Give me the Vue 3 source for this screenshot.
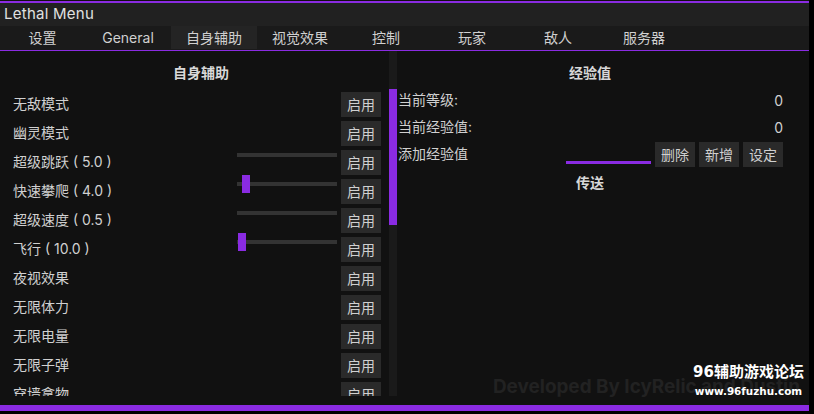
<script setup>
const tabs = ['设置', 'General', '自身辅助', '视觉效果', '控制', '玩家', '敌人', '服务器']
const rows = [
  { label: '无敌模式' },
  { label: '幽灵模式' },
  { label: '超级跳跃 ( 5.0 )', slider: true },
  { label: '快速攀爬 ( 4.0 )', slider: true, thumb: 5 },
  { label: '超级速度 ( 0.5 )', slider: true },
  { label: '飞行 ( 10.0 )', slider: true, thumb: 1 },
  { label: '夜视效果' },
  { label: '无限体力' },
  { label: '无限电量' },
  { label: '无限子弹' },
  { label: '穿墙拿物' }
]
</script>

<template>
  <div class="screen">
    <div class="window">
      <div class="title">Lethal Menu</div>
      <nav class="tabs">
        <div v-for="(t, i) in tabs" :key="t" class="tab" :class="{ active: i === 2 }">{{ t }}</div>
      </nav>
      <main class="main">
        <section class="left">
          <h2 class="head">自身辅助</h2>
          <div v-for="r in rows" :key="r.label" class="row">
            <span class="label">{{ r.label }}</span>
            <div v-if="r.slider" class="track">
              <i v-if="r.thumb" class="thumb" :style="{ left: r.thumb + 'px' }"></i>
            </div>
            <button class="btn">启用</button>
          </div>
        </section>
        <div class="scroll"><div class="scroll-thumb"></div></div>
        <section class="right">
          <h2 class="head">经验值</h2>
          <div class="info"><span class="lift">当前等级:</span><span class="val">0</span></div>
          <div class="info"><span class="lift">当前经验值:</span><span class="val">0</span></div>
          <div class="info">
            <span class="grow lift">添加经验值</span>
            <div class="input"></div>
            <div class="btns">
              <button class="btn">删除</button>
              <button class="btn">新增</button>
              <button class="btn">设定</button>
            </div>
          </div>
          <h2 class="head second">传送</h2>
        </section>
        <div class="credit">Developed By IcyRelic and Dustin</div>
      </main>
      <div class="bottom"></div>
    </div>
    <div class="mark">
      <div class="mark-a">96辅助游戏论坛</div>
      <div class="mark-b">www.96fuzhu.com</div>
    </div>
  </div>
</template>

<style scoped>
.screen {
  position: relative;
  width: 814px;
  height: 414px;
  background: #000;
  overflow: hidden;
  font-family: Inter, "Noto Sans CJK SC", sans-serif;
  color: #d0d0d0;
  font-size: 14px;
}
.window {
  width: 809px;
  height: 411px;
  padding-top: 1px;
  box-sizing: border-box;
  display: flex;
  flex-direction: column;
  background: #111;
}
.title {
  height: 23px;
  line-height: 22px;
  border-top: 2px solid #8a2be2;
  background: #212121;
  padding-left: 4px;
  font-size: 15px;
  letter-spacing: 0.25px;
  color: #e0e0e0;
}
.tabs {
  display: flex;
  height: 24px;
  background: #1a1a1a;
  border-bottom: 1px solid #8a2be2;
}
.tab {
  width: 86px;
  height: 23px;
  line-height: 24px;
  text-align: center;
  flex: none;
}
.tab:first-child {
  width: 85px;
}
.tab.active {
  background: #242424;
}
.main {
  position: relative;
  flex: 1;
  display: flex;
  min-height: 0;
}
.head {
  margin: 0;
  height: 22px;
  line-height: 22px;
  font-size: 14px;
  font-weight: 700;
  text-align: center;
  color: #d8d8d8;
}
.left {
  width: 389px;
  height: 345px;
  box-sizing: border-box;
  padding: 11px 8px 0 0;
  overflow: hidden;
  flex: none;
}
.left .head {
  margin: 0 -21px 8px 0;
}
.row {
  display: flex;
  align-items: center;
  height: 25px;
  margin-bottom: 4px;
  padding-left: 13px;
}
.label {
  flex: 1;
  padding-bottom: 4px;
}
.track {
  position: relative;
  align-self: flex-start;
  width: 100px;
  height: 4px;
  margin: 3px 4px 0 0;
  background: #333;
}
.thumb {
  position: absolute;
  top: -7px;
  width: 8px;
  height: 18px;
  background: #8a2be2;
}
.btn {
  width: 40px;
  height: 25px;
  padding: 0;
  border: 0;
  background: #2a2a2a;
  color: #d0d0d0;
  font: inherit;
  line-height: 25px;
  flex: none;
}
.scroll {
  width: 8px;
  height: 345px;
  background: #1a1a1a;
  flex: none;
}
.scroll-thumb {
  margin-top: 38px;
  height: 136px;
  background: #8a2be2;
}
.right {
  flex: 1;
  padding: 11px 26px 0 1px;
  min-width: 0;
}
.right .head {
  margin-left: -1px;
}
.info {
  display: flex;
  align-items: center;
  justify-content: space-between;
  height: 27px;
}
.lift {
  padding-bottom: 3px;
}
.right .head:first-child {
  margin-bottom: 3px;
}
.val {
  padding-bottom: 1px;
}
.grow {
  flex: 1;
}
.input {
  width: 85px;
  height: 3px;
  margin: 16px 4px 0 0;
  background: #8a2be2;
}
.btns {
  display: flex;
  gap: 4px;
}
.second {
  margin-top: 4px;
}
.credit {
  position: absolute;
  right: 9px;
  top: 324px;
  font-size: 18.9px;
  font-weight: 700;
  color: #222;
  white-space: nowrap;
}
.bottom {
  height: 6px;
  flex: none;
  margin-top: 1px;
  background: #8a2be2;
}
.mark {
  position: absolute;
  left: 690px;
  top: 362px;
  width: 117px;
  color: #fff;
  text-align: center;
  font-weight: 700;
  font-family: "DejaVu Sans", "Noto Sans CJK SC", sans-serif;
}
.mark-a {
  font-size: 15px;
  line-height: 20px;
  white-space: nowrap;
}
.mark-b {
  font-size: 10.4px;
  line-height: 19px;
  white-space: nowrap;
}
</style>
